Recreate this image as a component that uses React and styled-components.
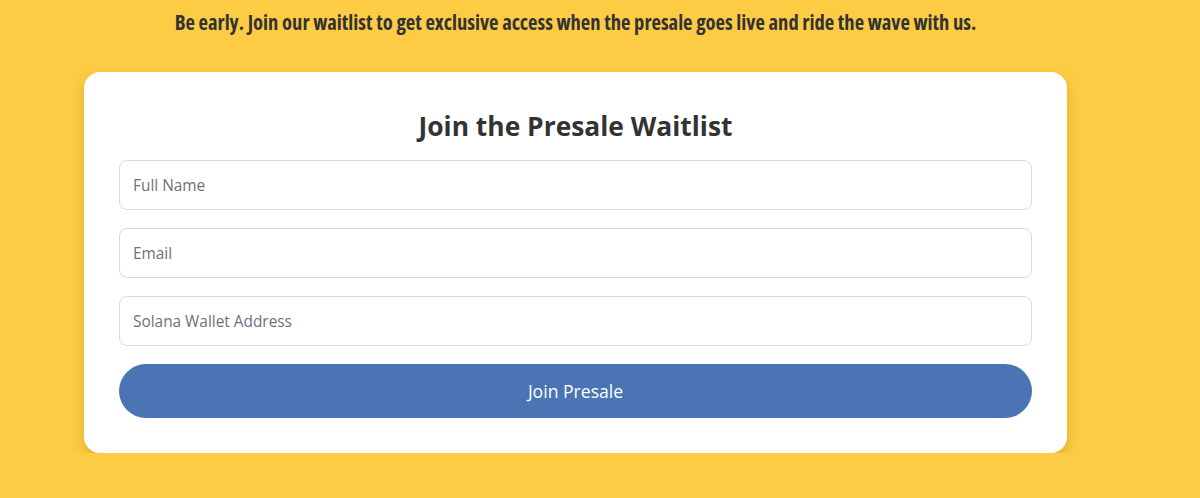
import React from "react";
import styled, { createGlobalStyle } from "styled-components";

const Global = createGlobalStyle`
  html, body { margin: 0; padding: 0; background: #fecc44; }
  body { font-family: "Open Sans", sans-serif; }
`;

const Page = styled.div`
  width: 1151px;
  display: flex;
  flex-direction: column;
  align-items: center;
`;

const Tagline = styled.p`
  margin: 9px 0 0;
  font-family: "Open Sans", "Liberation Sans Narrow", sans-serif;
  font-stretch: 75%;
  font-weight: 700;
  font-size: 20.55px;
  line-height: 27px;
  color: #333333;
  text-align: center;
`;

const Card = styled.form`
  margin-top: 36px;
  width: 983px;
  box-sizing: border-box;
  padding: 35px;
  background: #ffffff;
  border-radius: 16px;
  box-shadow: 0 6px 14px rgba(180, 130, 0, 0.4);
  display: flex;
  flex-direction: column;
  gap: 18px;
`;

const Title = styled.h2`
  margin: 1px 0 -2px;
  font-size: 26.4px;
  line-height: 36px;
  font-weight: 700;
  color: #333333;
  text-align: center;
`;

const Field = styled.input`
  height: 50px;
  box-sizing: border-box;
  border: 1px solid #d6dbe3;
  border-radius: 8px;
  padding: 0 13px;
  font-family: "Open Sans", sans-serif;
  font-size: 15.4px;
  color: #333;
  background: #fff;
  outline: none;
  &::placeholder { color: #6b7280; }
`;

const Submit = styled.button`
  height: 54px;
  border: none;
  border-radius: 27px;
  background: #4a74b3;
  color: #ffffff;
  font-family: "Open Sans", sans-serif;
  font-size: 17.6px;
  cursor: pointer;
`;

export default function App() {
  return (
    <>
      <Global />
      <Page>
        <Tagline>
          Be early. Join our waitlist to get exclusive access when the presale goes live and ride the wave with us.
        </Tagline>
        <Card onSubmit={(e) => e.preventDefault()}>
          <Title>Join the Presale Waitlist</Title>
          <Field placeholder="Full Name" />
          <Field placeholder="Email" />
          <Field placeholder="Solana Wallet Address" />
          <Submit type="submit">Join Presale</Submit>
        </Card>
      </Page>
    </>
  );
}
